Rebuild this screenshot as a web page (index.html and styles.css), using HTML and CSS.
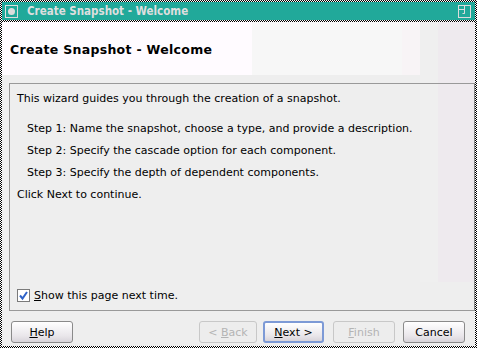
FILE: index.html
```html
<!DOCTYPE html>
<html>
<head>
<meta charset="utf-8">
<link rel="stylesheet" href="styles.css">
</head>
<body>
<div class="window">
  <div class="titlebar">
    <span class="ticon"><span class="dot"></span></span>
    <span class="ttext">Create Snapshot - Welcome</span>
    <svg class="tmax" width="13" height="13" viewBox="0 0 13 13"><rect x="0.5" y="0.5" width="12" height="12" fill="none" stroke="#dcdcdc"/><path d="M0.5 4.5H6.5V8.5H4.5M6.5 0.5V8.5" fill="none" stroke="#dcdcdc"/></svg>
  </div>
  <div class="client">
    <div class="header">
      <div class="htitle">Create Snapshot - Welcome</div>
      <div class="hdeco a"></div>
      <div class="hdeco b"></div>
      <div class="hdeco c"></div>
    </div>
    <div class="body">
      <div class="panel">
        <p class="line">This wizard guides you through the creation of a snapshot.</p>
        <p class="line step first">Step 1: Name the snapshot, choose a type, and provide a description.</p>
        <p class="line step">Step 2: Specify the cascade option for each component.</p>
        <p class="line step">Step 3: Specify the depth of dependent components.</p>
        <p class="line">Click Next to continue.</p>
        <label class="check"><span class="box"><svg width="11" height="11" viewBox="0 0 11 11"><path d="M2 5.5L4.5 8.5L9 2" fill="none" stroke="#2f62c8" stroke-width="2"/></svg></span><span><u>S</u>how this page next time.</span></label>
      </div>
      <div class="buttons">
        <button class="btn help"><u>H</u>elp</button>
        <div class="spacer"></div>
        <button class="btn disabled">&lt; <u>B</u>ack</button>
        <button class="btn default"><u>N</u>ext &gt;</button>
        <button class="btn disabled fin"><u>F</u>inish</button>
        <button class="btn cancel">Cancel</button>
      </div>
    </div>
  </div>
</div>
</body>
</html>
```
FILE: styles.css
```css
* { box-sizing: border-box; }
html, body { margin: 0; padding: 0; }
body { width: 477px; height: 348px; overflow: hidden; background: #000; }
.window {
  width: 477px; height: 348px;
  padding: 2px;
  background-color: #fff;
  background-image: conic-gradient(#000 25%, #fff 0 50%, #000 0 75%, #fff 0);
  background-size: 2px 2px;
  display: flex; flex-direction: column;
}
.titlebar {
  height: 18px; background: #21a99a;
  display: flex; align-items: center;
  padding: 0 4px 0 3px;
  margin-bottom: 2px;
}
.ticon {
  width: 13px; height: 13px; border: 1px solid #dcdcdc;
  display: flex; align-items: center; justify-content: center;
}
.dot { width: 7px; height: 7px; border-radius: 50%; background: #dcdcdc; }
.ttext {
  margin-left: 9px; color: #dedede;
  font: bold 11.5px "DejaVu Sans Condensed", "DejaVu Sans", sans-serif; font-stretch: condensed;
  flex: 1;
}
.tmax { display: block; }
.client { flex: 1; background: #eeeeee; display: flex; flex-direction: column; }
.header {
  height: 53px; background: #fffbff; position: relative;
  display: flex; align-items: center; padding-left: 8px;
}
.htitle { font: bold 12.5px "DejaVu Sans", sans-serif; color: #000; position: relative; z-index: 1; letter-spacing: 0.3px; padding-top: 1px; }
.hdeco { position: absolute; top: 0; }
.hdeco.a { left: 250px; width: 150px; height: 53px; background: #f7f7f7; }
.hdeco.b { left: 400px; width: 18px; height: 53px; background: #f8f4f6; }
.hdeco.c { left: 418px; width: 55px; height: 260px; background: linear-gradient(to right, #efefef 0 18px, #eeeaee 18px); }
.body { flex: 1; display: flex; flex-direction: column; padding: 8px 0 0 7px; position: relative; z-index: 1; }
.panel {
  height: 228px; border: 1px solid #999;
  border-right-color: #888;
  padding: 4px 0 0 7px;
  font: 11px "DejaVu Sans", sans-serif; color: #000;
  display: flex; flex-direction: column;
}
.line { margin: 0; height: 22px; line-height: 22px; white-space: nowrap; }
.step { padding-left: 10px; }
.step.first { margin-top: 8px; }
.check { margin-top: auto; margin-bottom: 8px; display: flex; align-items: center; gap: 4px; }
.box {
  width: 13px; height: 13px; border: 1px solid #7a7a7a; background: #fff;
  display: flex; align-items: center; justify-content: center;
}
.box svg { display: block; }
.buttons { display: flex; align-items: center; padding: 10px 0 0 2px; }
.spacer { flex: 1; }
.btn {
  height: 22px; width: 62px; padding: 0;
  font: 11px "DejaVu Sans", sans-serif; color: #000;
  border: 1px solid #8a8a8a; border-radius: 3px;
  background: linear-gradient(to bottom, #ffffff, #e9e6ea 70%, #d8d4da);
}
.btn.disabled { color: #b4b4b4; border-color: #c8c8c8; background: #ededed; width: 58px; }
.btn.default { border: 2px solid #7d9ad6; margin-left: 6px; width: 61px; }
.btn.fin { margin-left: 9px; width: 62px; }
.btn.cancel { margin-left: 8px; margin-right: 10px; }
```
